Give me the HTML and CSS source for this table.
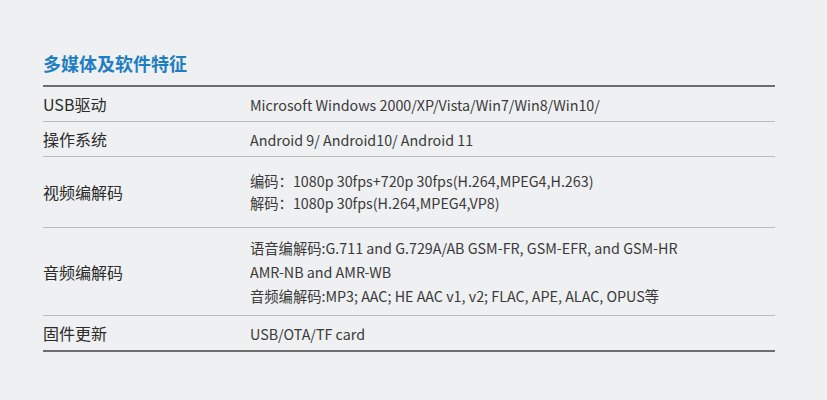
FILE: index.html
```html
<!DOCTYPE html>
<html lang="zh">
<head>
<meta charset="utf-8">
<link rel="stylesheet" href="styles.css">
</head>
<body>
<div class="page">
  <h2 class="title">多媒体及软件特征</h2>
  <div class="table">
    <div class="row r-usb">
      <div class="label">USB驱动</div>
      <div class="value">Microsoft Windows 2000/XP/Vista/Win7/Win8/Win10/</div>
    </div>
    <div class="row r-os">
      <div class="label">操作系统</div>
      <div class="value">Android 9/ Android10/ Android 11</div>
    </div>
    <div class="row r-video">
      <div class="label">视频编解码</div>
      <div class="value">
        <div>编码：1080p 30fps+720p 30fps(H.264,MPEG4,H.263)</div>
        <div>解码：1080p 30fps(H.264,MPEG4,VP8)</div>
      </div>
    </div>
    <div class="row r-audio">
      <div class="label">音频编解码</div>
      <div class="value">
        <div>语音编解码:G.711 and G.729A/AB GSM-FR, GSM-EFR, and GSM-HR</div>
        <div>AMR-NB and AMR-WB</div>
        <div>音频编解码:MP3; AAC; HE AAC v1, v2; FLAC, APE, ALAC, OPUS等</div>
      </div>
    </div>
    <div class="row r-fw last">
      <div class="label">固件更新</div>
      <div class="value">USB/OTA/TF card</div>
    </div>
  </div>
</div>
</body>
</html>
```
FILE: styles.css
```css
html, body {
  margin: 0;
  padding: 0;
  background: #eef0f1;
}
body {
  font-family: "Noto Sans CJK SC", "Noto Sans", sans-serif;
  color: #333;
  width: 827px;
  height: 400px;
  overflow: hidden;
}
.page {
  padding: 51px 52px 0 43px;
}
.title {
  margin: 0;
  font-size: 18px;
  line-height: 24px;
  font-weight: 700;
  color: #1f7dc2;
  height: 34px;
}
.table {
  border-top: 2px solid #6b6d6f;
  border-bottom: 2px solid #6b6d6f;
  width: 732px;
}
.row {
  display: flex;
  align-items: center;
  border-bottom: 1px solid #b9bbbd;
}
.row.last {
  border-bottom: none;
}
.label {
  width: 207px;
  flex: none;
  font-size: 16px;
  color: #2b2b2b;
}
.value {
  color: #3a3a3a;
  font-size: 14.3px;
}
.r-usb, .r-os, .r-fw {
  height: 34px;
}
.r-video {
  height: 70px;
  line-height: 22px;
}
.r-audio {
  height: 87px;
  line-height: 24px;
}
```
